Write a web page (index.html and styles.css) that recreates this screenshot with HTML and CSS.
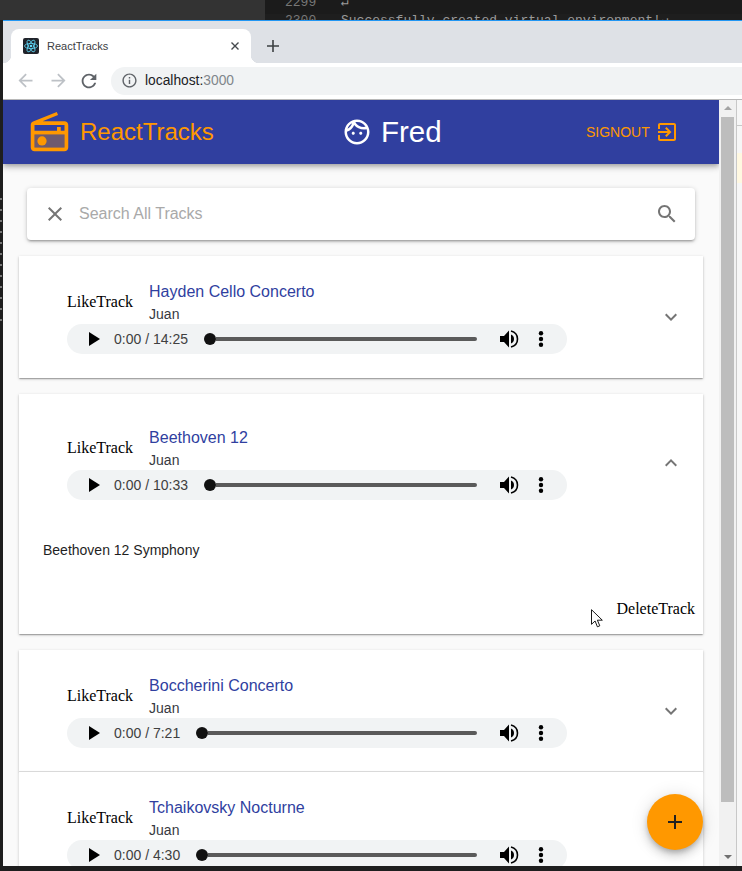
FILE: index.html
```html
<!DOCTYPE html>
<html lang="en">
<head>
    <meta charset="UTF-8">
    <meta name="viewport" content="width=device-width, initial-scale=1.0">
    <title>ReactTracks</title>
    <link rel="stylesheet" href="styles.css">
</head>
<body>
    <!-- editor showing behind the browser window -->
    <div class="editor-strip">
        <div class="editor-side"></div>
        <div class="editor-code">
            <div class="code-line"><span class="line-no">2299</span><span>↵</span></div>
            <div class="code-line"><span class="line-no">2300</span><span>Successfully created virtual environment!↵</span></div>
        </div>
    </div>

    <div class="window">
        <div class="tab-bar">
            <div class="tab">
                <svg class="favicon" viewBox="0 0 16 16">
                    <rect width="16" height="16" rx="2" fill="#20232a"/>
                    <g fill="none" stroke="#61dafb" stroke-width="0.8">
                        <ellipse cx="8" cy="8" rx="6.5" ry="2.6"/>
                        <ellipse cx="8" cy="8" rx="6.5" ry="2.6" transform="rotate(60 8 8)"/>
                        <ellipse cx="8" cy="8" rx="6.5" ry="2.6" transform="rotate(120 8 8)"/>
                    </g>
                    <circle cx="8" cy="8" r="1.3" fill="#61dafb"/>
                </svg>
                <span class="tab-title">ReactTracks</span>
                <svg class="tab-close" viewBox="0 0 8 8"><path d="M0.5 0.5l7 7M7.5 0.5l-7 7" stroke="#45494d" stroke-width="1.4"/></svg>
            </div>
            <svg class="new-tab" viewBox="0 0 12 12"><path d="M6 0v12M0 6h12" stroke="#3c4043" stroke-width="1.6"/></svg>
        </div>

        <div class="toolbar">
            <div class="nav-btn"><svg class="nav-icon" viewBox="0 0 24 24"><path fill="#bdc1c6" d="M20 11H7.83l5.59-5.59L12 4l-8 8 8 8 1.41-1.41L7.83 13H20v-2z"/></svg></div>
            <div class="nav-btn"><svg class="nav-icon" viewBox="0 0 24 24"><path fill="#bdc1c6" d="M12 4l-1.41 1.41L16.17 11H4v2h12.17l-5.58 5.59L12 20l8-8z"/></svg></div>
            <div class="nav-btn nav-reload"><svg class="reload-icon" viewBox="0 0 24 24"><path fill="#5f6368" d="M17.65 6.35C16.2 4.9 14.21 4 12 4c-4.42 0-7.99 3.58-7.99 8s3.57 8 7.99 8c3.73 0 6.84-2.55 7.73-6h-2.08c-.82 2.33-3.04 4-5.65 4-3.31 0-6-2.69-6-6s2.69-6 6-6c1.66 0 3.14.69 4.22 1.78L13 11h7V4l-2.35 2.35z"/></svg></div>
            <div class="omnibox">
                <svg class="info-icon" viewBox="0 0 24 24"><path fill="#5f6368" d="M11 7h2v2h-2zm0 4h2v6h-2zm1-9C6.48 2 2 6.48 2 12s4.48 10 10 10 10-4.48 10-10S17.52 2 12 2zm0 18c-4.41 0-8-3.59-8-8s3.59-8 8-8 8 3.59 8 8-3.59 8-8 8z"/></svg>
                <span class="url">localhost:<span class="url-port">3000</span></span>
            </div>
        </div>

        <div class="viewport">
            <div class="page">
                <header class="app-bar">
                    <div class="brand">
                        <svg class="brand-icon" viewBox="0 0 24 24">
                            <path fill="#ff9800" opacity=".3" d="M4 13h16v7H4z"/>
                            <path fill="#ff9800" d="M20 6H8.3l8.26-3.34L15.88 1 3.24 6.15C2.51 6.43 2 7.17 2 8v12c0 1.1.89 2 2 2h16c1.11 0 2-.89 2-2V8c0-1.11-.89-2-2-2zm0 2v3h-2V9h-2v2H4V8h16zM4 20v-7h16v7H4z"/>
                            <circle fill="#ff9800" cx="8" cy="16.48" r="2.46"/>
                        </svg>
                        <span class="brand-name">ReactTracks</span>
                    </div>
                    <div class="user">
                        <svg class="face-icon" viewBox="0 0 24 24"><path fill="#fff" d="M10.25 13c0 .69-.56 1.25-1.25 1.25S7.75 13.69 7.75 13s.56-1.25 1.25-1.25 1.25.56 1.25 1.25zM15 11.75c-.69 0-1.25.56-1.25 1.25s.56 1.25 1.25 1.25 1.25-.56 1.25-1.25-.56-1.25-1.25-1.25zm7 .25c0 5.52-4.48 10-10 10S2 17.52 2 12 6.48 2 12 2s10 4.48 10 10zM10.66 4.12C12.06 6.44 14.6 8 17.5 8c.46 0 .91-.05 1.34-.12C17.44 5.56 14.9 4 12 4c-.46 0-.91.05-1.34.12zM4.42 9.47c1.71-.97 3.03-2.55 3.66-4.44C6.37 6 5.05 7.58 4.42 9.47zM20 12c0-.78-.12-1.53-.33-2.24-.7.15-1.42.24-2.17.24-3.13 0-5.92-1.44-7.76-3.69C8.69 8.87 6.6 10.88 4 11.86c.01.04 0 .09 0 .14 0 4.41 3.59 8 8 8s8-3.59 8-8z"/></svg>
                        <span class="user-name">Fred</span>
                    </div>
                    <div class="signout">
                        <span>SIGNOUT</span>
                        <svg class="signout-icon" viewBox="0 0 24 24"><path fill="#ff9800" d="M10.09 15.59L11.5 17l5-5-5-5-1.41 1.41L12.67 11H3v2h9.67l-2.58 2.59zM19 3H5c-1.11 0-2 .9-2 2v4h2V5h14v14H5v-4H3v4c0 1.1.89 2 2 2h14c1.1 0 2-.9 2-2V5c0-1.1-.9-2-2-2z"/></svg>
                    </div>
                </header>

                <div class="search">
                    <svg class="search-icon" viewBox="0 0 24 24"><path fill="#757575" d="M19 6.41L17.59 5 12 10.59 6.41 5 5 6.41 10.59 12 5 17.59 6.41 19 12 13.41 17.59 19 19 17.59 13.41 12z"/></svg>
                    <span class="search-placeholder">Search All Tracks</span>
                    <svg class="search-icon" viewBox="0 0 24 24"><path fill="#757575" d="M15.5 14h-.79l-.28-.27C15.41 12.59 16 11.11 16 9.5 16 5.91 13.09 3 9.5 3S3 5.91 3 9.5 5.91 16 9.5 16c1.61 0 3.09-.59 4.23-1.57l.27.28v.79l5 4.99L20.49 19l-4.99-5zm-6 0C7.01 14 5 11.99 5 9.5S7.01 5 9.5 5 14 7.01 14 9.5 11.99 14 9.5 14z"/></svg>
                </div>

                <div class="track-list">
                    <div class="track">
                        <div class="track-head">
                            <div class="track-main">
                                <div class="track-info">
                                    <span class="like">LikeTrack</span>
                                    <div>
                                        <div class="track-title">Hayden Cello Concerto</div>
                                        <div class="track-artist">Juan</div>
                                    </div>
                                </div>
                                <div class="player">
                                    <svg class="play" viewBox="0 0 11 14"><path d="M0 0l11 7-11 7z"/></svg>
                                    <span class="time">0:00 / 14:25</span>
                                    <span class="thumb"></span>
                                    <span class="progress"></span>
                                    <svg class="volume" viewBox="0 0 19 18"><path d="M0 6h4l5-5.5v17L4 12H0z"/><path d="M11 4.5c2 .8 3 2.5 3 4.5s-1 3.7-3 4.5z"/><path d="M11 1c3.8 1 6.5 4 6.5 8s-2.700 7-6.500 8" fill="none" stroke="#000" stroke-width="1.600"/></svg>
                                    <svg class="more" viewBox="0 0 6 18"><circle cx="3" cy="3.200" r="2.200"/><circle cx="3" cy="9" r="2.200"/><circle cx="3" cy="14.800" r="2.200"/></svg>
                                </div>
                            </div>
                            <svg class="chevron" viewBox="0 0 24 24"><path d="M16.59 8.59L12 13.17 7.41 8.59 6 10l6 6 6-6z"/></svg>
                        </div>
                    </div>

                    <div class="track">
                        <div class="track-head track-head-open">
                            <div class="track-main">
                                <div class="track-info">
                                    <span class="like">LikeTrack</span>
                                    <div>
                                        <div class="track-title">Beethoven 12</div>
                                        <div class="track-artist">Juan</div>
                                    </div>
                                </div>
                                <div class="player">
                                    <svg class="play" viewBox="0 0 11 14"><path d="M0 0l11 7-11 7z"/></svg>
                                    <span class="time">0:00 / 10:33</span>
                                    <span class="thumb"></span>
                                    <span class="progress"></span>
                                    <svg class="volume" viewBox="0 0 19 18"><path d="M0 6h4l5-5.5v17L4 12H0z"/><path d="M11 4.5c2 .8 3 2.5 3 4.5s-1 3.7-3 4.5z"/><path d="M11 1c3.8 1 6.5 4 6.5 8s-2.700 7-6.500 8" fill="none" stroke="#000" stroke-width="1.600"/></svg>
                                    <svg class="more" viewBox="0 0 6 18"><circle cx="3" cy="3.200" r="2.200"/><circle cx="3" cy="9" r="2.200"/><circle cx="3" cy="14.800" r="2.200"/></svg>
                                </div>
                            </div>
                            <svg class="chevron" viewBox="0 0 24 24"><path d="M12 8l-6 6 1.410 1.410L12 10.830l4.590 4.580L18 14z"/></svg>
                        </div>
                        <div class="track-desc">Beethoven 12 Symphony</div>
                        <div class="track-actions"><span class="delete">DeleteTrack</span></div>
                        <svg class="cursor" viewBox="0 0 12 19"><path fill="#fff" stroke="#000" stroke-width="0.900" d="M.5.700v14.600l3.600-3.300 2.300 5.800 2.400-1-2.400-5.600h4.900z"/></svg>
                    </div>

                    <div class="track track-joined">
                        <div class="track-head">
                            <div class="track-main">
                                <div class="track-info">
                                    <span class="like">LikeTrack</span>
                                    <div>
                                        <div class="track-title">Boccherini Concerto</div>
                                        <div class="track-artist">Juan</div>
                                    </div>
                                </div>
                                <div class="player">
                                    <svg class="play" viewBox="0 0 11 14"><path d="M0 0l11 7-11 7z"/></svg>
                                    <span class="time">0:00 / 7:21</span>
                                    <span class="thumb"></span>
                                    <span class="progress"></span>
                                    <svg class="volume" viewBox="0 0 19 18"><path d="M0 6h4l5-5.5v17L4 12H0z"/><path d="M11 4.5c2 .8 3 2.5 3 4.5s-1 3.7-3 4.5z"/><path d="M11 1c3.8 1 6.5 4 6.5 8s-2.700 7-6.500 8" fill="none" stroke="#000" stroke-width="1.600"/></svg>
                                    <svg class="more" viewBox="0 0 6 18"><circle cx="3" cy="3.200" r="2.200"/><circle cx="3" cy="9" r="2.200"/><circle cx="3" cy="14.800" r="2.200"/></svg>
                                </div>
                            </div>
                            <svg class="chevron" viewBox="0 0 24 24"><path d="M16.59 8.59L12 13.17 7.41 8.59 6 10l6 6 6-6z"/></svg>
                        </div>
                    </div>

                    <div class="track track-divided">
                        <div class="track-head">
                            <div class="track-main">
                                <div class="track-info">
                                    <span class="like">LikeTrack</span>
                                    <div>
                                        <div class="track-title">Tchaikovsky Nocturne</div>
                                        <div class="track-artist">Juan</div>
                                    </div>
                                </div>
                                <div class="player">
                                    <svg class="play" viewBox="0 0 11 14"><path d="M0 0l11 7-11 7z"/></svg>
                                    <span class="time">0:00 / 4:30</span>
                                    <span class="thumb"></span>
                                    <span class="progress"></span>
                                    <svg class="volume" viewBox="0 0 19 18"><path d="M0 6h4l5-5.5v17L4 12H0z"/><path d="M11 4.5c2 .8 3 2.5 3 4.5s-1 3.7-3 4.5z"/><path d="M11 1c3.8 1 6.5 4 6.5 8s-2.700 7-6.500 8" fill="none" stroke="#000" stroke-width="1.600"/></svg>
                                    <svg class="more" viewBox="0 0 6 18"><circle cx="3" cy="3.200" r="2.200"/><circle cx="3" cy="9" r="2.200"/><circle cx="3" cy="14.800" r="2.200"/></svg>
                                </div>
                            </div>
                        </div>
                    </div>
                </div>

                <div class="fab">
                    <svg class="fab-icon" viewBox="0 0 24 24"><path fill="#212121" d="M19 13h-6v6h-2v-6H5v-2h6V5h2v6h6v2z"/></svg>
                </div>
            </div>

            <div class="scrollbar">
                <div class="scroll-btn"><span class="arrow-up"></span></div>
                <div class="scroll-thumb"></div>
                <div class="scroll-rest"><span class="arrow-down"></span></div>
            </div>

            <div class="offside">
                <div class="offside-top"></div>
                <div class="offside-row"></div>
                <div class="offside-note"></div>
            </div>
        </div>
    </div>
</body>
</html>
```

FILE: styles.css
```css
* {
    box-sizing: border-box;
}

body {
    font-family: "Liberation Sans", Arial, sans-serif;
    margin: 0;
    width: 742px;
    height: 871px;
    overflow: hidden;
    background-color: #1e1e1e;
    background-image: repeating-linear-gradient(#1e1e1e 0 8px, #777 8px 10px, #1e1e1e 10px 11px);
    background-size: 2px 140px;
    background-position: 0 190px;
    background-repeat: no-repeat;
}

/* Editor behind the browser */
.editor-strip {
    display: flex;
    height: 20px;
    overflow: hidden;
}

.editor-side {
    width: 265px;
    background-color: #333;
}

.editor-code {
    flex: 1;
    background-color: #1b1b1b;
    color: #9a9a9a;
    font-family: "Liberation Mono", monospace;
    font-size: 13px;
    line-height: 18px;
    margin-top: 0;
    padding-top: 0;
    transform: translateY(-6px);
}

.code-line {
    display: flex;
}

.line-no {
    width: 76px;
    padding-left: 20px;
    color: #777;
}

/* Browser window */
.window {
    height: 846px;
    margin-left: 3px;
    border-top: 1px solid #2196f3;
    background-color: #fff;
    overflow: hidden;
}

.tab-bar {
    display: flex;
    align-items: flex-end;
    height: 42px;
    padding-left: 8px;
    background-color: #dee1e6;
}

.tab {
    position: relative;
    display: flex;
    align-items: center;
    width: 240px;
    height: 34px;
    padding: 0 12px;
    background-color: #fff;
    border-radius: 8px 8px 0 0;
}

.tab::before,
.tab::after {
    content: "";
    position: absolute;
    bottom: 0;
    width: 8px;
    height: 8px;
}

.tab::before {
    left: -8px;
    background: radial-gradient(circle at 0 0, #dee1e6 8px, #fff 8.5px);
}

.tab::after {
    right: -8px;
    background: radial-gradient(circle at 100% 0, #dee1e6 8px, #fff 8.5px);
}

.favicon {
    width: 16px;
    height: 16px;
    margin-right: 8px;
}

.tab-title {
    flex: 1;
    font-size: 11px;
    color: #3c4043;
}

.tab-close {
    width: 8px;
    height: 8px;
}

.new-tab {
    width: 12px;
    height: 12px;
    margin: 0 0 11px 16px;
}

.toolbar {
    display: flex;
    align-items: center;
    height: 37px;
    padding: 0 0 1px 5.5px;
    background-color: #fff;
    border-bottom: 1px solid #b8b8b8;
}

.nav-btn {
    display: flex;
    justify-content: center;
    align-items: center;
    width: 33px;
}

.nav-reload {
    width: 29px;
    margin-right: 7.5px;
}

.nav-icon {
    width: 21px;
    height: 21px;
}

.reload-icon {
    width: 22px;
    height: 22px;
}

.omnibox {
    flex: 1;
    display: flex;
    align-items: center;
    height: 28px;
    padding-left: 10px;
    background-color: #f1f3f4;
    border-radius: 14px 0 0 14px;
}

.info-icon {
    width: 17px;
    height: 17px;
    margin-right: 7px;
}

.url {
    font-size: 13.8px;
    color: #202124;
}

.url-port {
    color: #80868b;
}

.viewport {
    display: flex;
    height: 766px;
}

/* The app itself */
.page {
    position: relative;
    width: 716px;
    overflow: hidden;
    background-color: #fafafa;
}

.app-bar {
    position: relative;
    display: flex;
    align-items: center;
    height: 64px;
    padding-left: 24px;
    background-color: #303f9f;
    box-shadow: 0px 2px 4px -1px rgba(0, 0, 0, 0.2), 0px 4px 5px 0px rgba(0, 0, 0, 0.14), 0px 1px 10px 0px rgba(0, 0, 0, 0.12);
}

.brand {
    display: flex;
    align-items: center;
    width: 315px;
}

.brand-icon {
    width: 45px;
    height: 45px;
    margin-right: 8px;
}

.brand-name {
    font-size: 24px;
    color: #ff9800;
}

.user {
    display: flex;
    align-items: center;
    width: 244px;
}

.face-icon {
    width: 30px;
    height: 30px;
    margin-right: 9px;
}

.user-name {
    font-size: 29.5px;
    color: #fff;
}

.signout {
    display: flex;
    align-items: center;
    gap: 5px;
    font-size: 14px;
    color: #ff9800;
}

.signout-icon {
    width: 24px;
    height: 24px;
}

.search {
    display: flex;
    align-items: center;
    height: 52px;
    margin: 24px 24px 16px;
    padding: 0 16px;
    background-color: #fff;
    border-radius: 4px;
    box-shadow: 0px 1px 5px 0px rgba(0, 0, 0, 0.2), 0px 2px 2px 0px rgba(0, 0, 0, 0.14), 0px 3px 1px -2px rgba(0, 0, 0, 0.12);
}

.search-icon {
    width: 24px;
    height: 24px;
}

.search-placeholder {
    flex: 1;
    margin-left: 12px;
    font-size: 16px;
    color: #a9a9a9;
}

.track-list {
    margin: 0 16px;
}

.track {
    position: relative;
    margin-bottom: 16px;
    background-color: #fff;
    box-shadow: 0px 1px 3px 0px rgba(0, 0, 0, 0.2), 0px 1px 1px 0px rgba(0, 0, 0, 0.14), 0px 2px 1px -1px rgba(0, 0, 0, 0.12);
}

.track-joined {
    margin-bottom: 0;
}

.track-divided {
    box-shadow: 0px 1px 3px 0px rgba(0, 0, 0, 0.2), 0px -1px 0px 0px #e0e0e0;
}

.track-head {
    display: flex;
    align-items: center;
    justify-content: space-between;
    padding: 24px 20px 24px 48px;
}

.track-head-open {
    padding-top: 32px;
    padding-bottom: 30px;
}

.track-main {
    width: 500px;
}

.track-info {
    display: flex;
    align-items: center;
    gap: 16px;
}

.like,
.delete {
    font-family: "Liberation Serif", "Times New Roman", serif;
    font-size: 16px;
    line-height: 18px;
    color: #000;
}

.track-title {
    font-size: 16px;
    line-height: 24px;
    color: #303f9f;
}

.track-artist {
    font-size: 14px;
    line-height: 20px;
    color: #37393f;
}

.player {
    display: flex;
    align-items: center;
    height: 30px;
    padding: 0 23px 0 22px;
    background-color: #f1f3f4;
    border-radius: 15px;
}

.play {
    width: 11px;
    height: 14px;
    margin-right: 14px;
}

.time {
    margin-right: 16px;
    font-size: 14px;
    color: #404040;
}

.thumb {
    width: 12px;
    height: 12px;
    background-color: #111;
    border-radius: 50%;
}

.progress {
    flex: 1;
    height: 4px;
    margin-right: 22.5px;
    background-color: #5a5a5a;
    border-radius: 0 2px 2px 0;
}

.volume {
    width: 19px;
    height: 18px;
    margin-right: 19.5px;
}

.more {
    width: 6px;
    height: 18px;
}

.chevron {
    width: 24px;
    height: 24px;
    fill: #757575;
}

.track-desc {
    padding: 10px 24px 0;
    font-size: 14px;
    line-height: 20px;
    color: #1f1f1f;
}

.track-actions {
    display: flex;
    justify-content: flex-end;
    padding: 40px 8px 16px;
}

.cursor {
    position: absolute;
    right: 100px;
    bottom: 6px;
    width: 12px;
    height: 19px;
}

.fab {
    position: absolute;
    right: 16px;
    bottom: 16px;
    display: flex;
    justify-content: center;
    align-items: center;
    width: 56px;
    height: 56px;
    background-color: #ff9800;
    border-radius: 50%;
    box-shadow: 0px 3px 5px -1px rgba(0, 0, 0, 0.2), 0px 6px 10px 0px rgba(0, 0, 0, 0.14), 0px 1px 18px 0px rgba(0, 0, 0, 0.12);
}

.fab-icon {
    width: 24px;
    height: 24px;
}

/* Scrollbar drawn by hand so it lines up with the clipped page */
.scrollbar {
    display: flex;
    flex-direction: column;
    width: 17px;
    background-color: #f1f1f1;
}

.scroll-btn {
    display: flex;
    justify-content: center;
    height: 17px;
    padding-top: 6px;
}

.arrow-up,
.arrow-down {
    width: 0;
    height: 0;
    border-left: 4px solid transparent;
    border-right: 4px solid transparent;
}

.arrow-up {
    border-bottom: 4px solid #a3a3a3;
}

.arrow-down {
    border-top: 4px solid #707070;
}

.scroll-thumb {
    height: 685px;
    margin: 0 2px;
    background-color: #bdbdbd;
}

.scroll-rest {
    flex: 1;
    display: flex;
    justify-content: center;
    align-items: flex-end;
    padding-bottom: 7px;
}

.offside {
    flex: 1;
    background-color: #f6f6f6;
    border-left: 1px solid #c8c8c8;
}

.offside-top {
    height: 26px;
    border-bottom: 1px solid #c8c8c8;
}

.offside-row {
    height: 27px;
}

.offside-note {
    height: 30px;
    background-color: #fff8e1;
}
```
